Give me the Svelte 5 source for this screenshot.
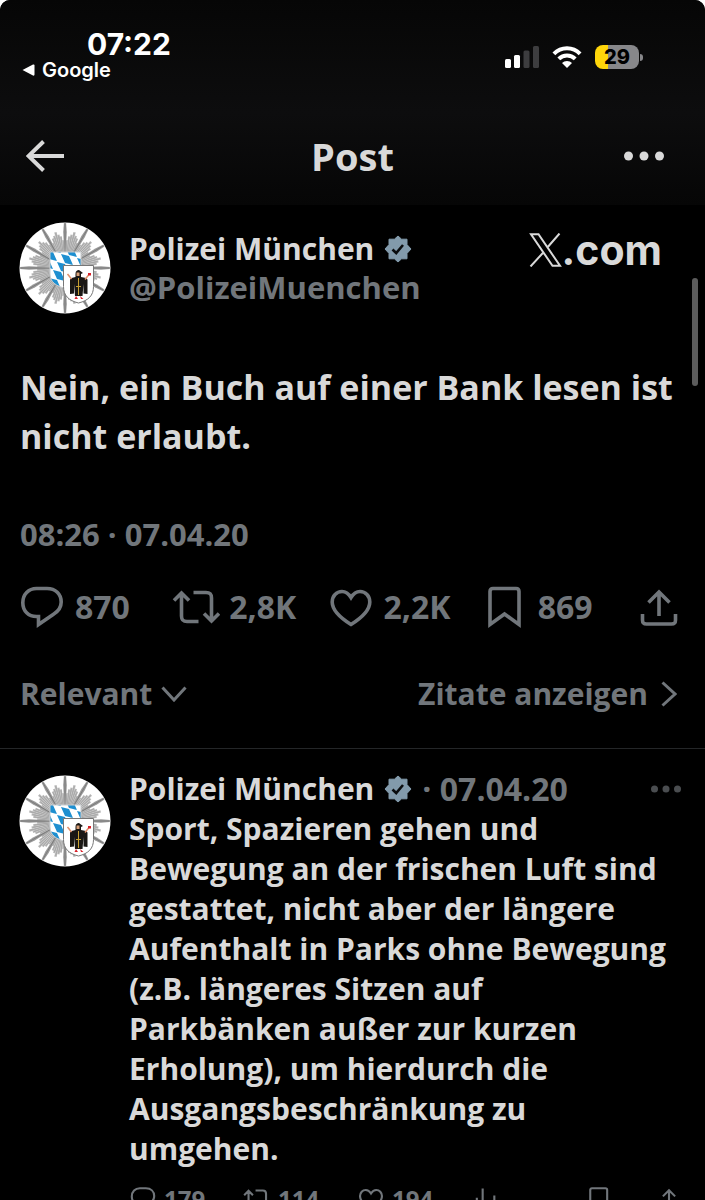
<script lang="ts">
  type IconName = "reply" | "repost" | "like" | "bookmark" | "share" | "views";

  type Action = { icon: IconName; label: string; count?: string };

  const postActions: Action[] = [
    { icon: "reply", label: "Antworten", count: "870" },
    { icon: "repost", label: "Reposten", count: "2,8K" },
    { icon: "like", label: "Gefällt mir", count: "2,2K" },
    { icon: "bookmark", label: "Lesezeichen", count: "869" },
    { icon: "share", label: "Teilen" },
  ];

  const replyActions: Action[] = [
    { icon: "reply", label: "Antworten", count: "179" },
    { icon: "repost", label: "Reposten", count: "114" },
    { icon: "like", label: "Gefällt mir", count: "194" },
    { icon: "views", label: "Aufrufe" },
    { icon: "bookmark", label: "Lesezeichen" },
    { icon: "share", label: "Teilen" },
  ];

  // Police star: twelve long rays with shorter ones stepped in between
  const stepLengths = [45, 28, 32, 34, 37, 34, 32, 28];

  const rays = Array.from({ length: 96 }, (_, i) => {
    const angle = (i / 96) * Math.PI * 2;
    const len = stepLengths[i % 8];
    const long = i % 8 === 0;
    const at = (r: number, a: number) =>
      `${(46 + r * Math.sin(a)).toFixed(1)} ${(46 - r * Math.cos(a)).toFixed(1)}`;
    return {
      shape: long
        ? `M46 46L${at(36, angle - 0.05)}L${at(len, angle - 0.025)}L${at(len, angle + 0.025)}L${at(36, angle + 0.05)}Z`
        : `M46 46L${at(len, angle - 0.034)}L${at(len, angle + 0.034)}Z`,
      line: `M46 46L${at(len - 1, angle)}`,
      long,
    };
  });

  // Bavarian lozenges, one parallelogram per blue field
  const lozenges: string[] = [];
  for (let row = 0; row < 6; row++) {
    for (let col = -2; col < 4; col++) {
      const x = 30 + col * 16 + ((row * 12) % 16);
      const y = 20 + row * 9 + (x - 30) * 0.25;
      lozenges.push(`M${x} ${y}l8 2l4 9l-8-2z`);
    }
  }
</script>

{#snippet icon(name: IconName)}
  <svg class="icon" viewBox="0 0 48 48" stroke-width="3.6" aria-hidden="true">
    {#if name === "reply"}
      <path d="M18.500 5.500h10.500c8.500 0 14.200 5.500 14.200 13.500c0 6-3.200 9.500-7.700 12.200L20.500 41.500v-8h-2C10.500 33.500 4.800 28 4.800 19.700S10.500 5.500 18.500 5.500z" />
    {:else if name === "repost"}
      <path d="M2 17.500L9.500 10l7.500 7.500M9.500 10.500V33c0 4 1.500 5.500 5.500 5.500h11.500M21.500 9.500H34c4 0 5.500 1.500 5.500 5.500v22.500M32 30.500l7.500 7.500 7.500-7.500" />
    {:else if name === "like"}
      <path d="M24 14.500C21.500 10.500 18.500 8.500 15 8.500c-5.500 0-9.800 4.500-9.800 10.500C5.200 27 12 34 24 41.500C36 34 42.800 27 42.800 19c0-6-4.300-10.500-9.800-10.500c-3.500 0-6.500 2-9 6z" />
    {:else if name === "bookmark"}
      <path d="M9 41.500V8.500c0-2 1-3 3-3h23c2 0 3 1 3 3v33L23.500 31z" />
    {:else if name === "share"}
      <path d="M24 33V9M13.500 19.500L24 9l10.500 10.500M7.500 31v6c0 3 1 4 4 4h25c3 0 4-1 4-4v-6" />
    {:else}
      <path d="M20 42V6M40 42V18M10 42V22M30 42V28" />
    {/if}
  </svg>
{/snippet}

{#snippet avatar()}
  <svg class="avatar" viewBox="0 0 92 92" role="img" aria-label="Polizei München">
    <circle cx="46" cy="46" r="45.5" fill="#fff" />
    {#each rays as ray}
      <path d={ray.shape} fill={ray.long ? "#9a9a9a" : "#bababa"} />
      <path d={ray.line} stroke={ray.long ? "#777" : "#9c9c9c"} stroke-width={ray.long ? 0.9 : 0.6} />
    {/each}
    <clipPath id="bavaria">
      <path d="M31 30h31v22c0 8-6 12-15.500 14.500C37 64 31 60 31 52z" />
    </clipPath>
    <g clip-path="url(#bavaria)">
      <rect x="30" y="28" width="34" height="40" fill="#fff" />
      <path d={lozenges.join("")} fill="#1e8fd0" />
    </g>
    <path d="M31 30h31v22c0 8-6 12-15.500 14.500C37 64 31 60 31 52z" fill="none" stroke="#c9cdd0" />
    <path d="M44.500 43.500h30v21c0 9-5 14-15 16.500c-10-2.500-15-7.500-15-16.500z" fill="#fff" stroke="#777" />
    <path d="M56.500 52c0-3 1.500-4 3.500-4l4 3-2 1v3l5 1 1.500 1.500v14.500l-4-.5V62l-1 12h-7.500l-1-12v9.500l-4 .5V57.500l1.500-1.500 4-1z" fill="#1a1714" />
    <path d="M57.500 50.500h3v3.500h-3z" fill="#d8a078" />
    <path d="M59.500 56v17M57 64.500h5" stroke="#c8a032" />
    <path d="M48.500 52l4 5M70 52.500l-4 5" stroke="#e0906a" stroke-width="1.5" />
    <path d="M69 51h3v2.500h-3zM57 74l-1.500 3h3.500zM61 74l1 3h2.500z" fill="#d8222a" />
  </svg>
{/snippet}

{#snippet badge()}
  <svg class="badge" viewBox="0 0 28 28" role="img" aria-label="Verifiziert">
    <path d="M14 1l3.600 3.200h5.400v5.400L27 14l-4 4.400v5.400h-5.400L14 27l-3.600-3.200H5v-5.400L1 14l4-4.400V4.200h5.400z" fill="#829aab" stroke="#829aab" stroke-linejoin="round" />
    <path d="M8.500 14.500l3.700 3.500 6.800-8" fill="none" stroke="#0a0c0e" stroke-width="2.6" />
  </svg>
{/snippet}

{#snippet actionList(items: Action[])}
  {#each items as item}
    <button class="action" aria-label={item.label}>
      {@render icon(item.icon)}
      {#if item.count}<span>{item.count}</span>{/if}
    </button>
  {/each}
{/snippet}

<div class="screen">
  <header>
    <div class="status">
      <div class="clock">
        <time>07:22</time>
        <a href="#google">
          <svg viewBox="0 0 13 12" aria-hidden="true"><path d="M0.500 6L11 .5q1.500-.5 1.500 1v9q0 1.500-1.500 1z" fill="#fff" /></svg>
          Google
        </a>
      </div>
      <div class="indicators">
        <svg class="signal" viewBox="0 0 34 22" aria-hidden="true">
          <rect x="0" y="13" width="6" height="9" rx="1.5" fill="#fff" />
          <rect x="9" y="9" width="6" height="13" rx="1.5" fill="#fff" />
          <rect x="18.5" y="4.5" width="6" height="17.5" rx="1.5" fill="#3d3d3f" />
          <rect x="28" y="0" width="6" height="22" rx="1.5" fill="#3d3d3f" />
        </svg>
        <svg class="wifi" viewBox="0 0 30 22" aria-hidden="true">
          <g fill="none" stroke="#fff" stroke-width="4">
            <path d="M1.900 7.800a18.500 18.500 0 0 1 26.200 0" />
            <path d="M6.800 12.900a11.600 11.600 0 0 1 16.400 0" />
          </g>
          <path d="M15 22l-5-5a7 7 0 0 1 10 0z" fill="#fff" />
        </svg>
        <div class="battery"><span>29</span></div>
      </div>
    </div>
    <nav>
      <button class="back" aria-label="Zurück">
        <svg viewBox="0 0 38 32" aria-hidden="true"><path d="M17.500 1.500L2.500 16l15 14.500M2.500 16H38" /></svg>
      </button>
      <h1>Post</h1>
      <button class="more" aria-label="Mehr">
        <svg viewBox="0 0 40 10" aria-hidden="true"><circle cx="4.5" cy="5" r="4.5" /><circle cx="20" cy="5" r="4.5" /><circle cx="35.5" cy="5" r="4.5" /></svg>
      </button>
    </nav>
  </header>

  <main>
    <article class="post">
      <div class="author">
        {@render avatar()}
        <div class="names">
          <div class="name">Polizei München {@render badge()}</div>
          <div class="handle">@PolizeiMuenchen</div>
        </div>
        <div class="brand">
          <svg viewBox="0 0 33 34" role="img" aria-label="X">
            <path d="M2 1.200h7.500L31 32.800h-7.500zM30.500 .5L18.800 14M14.300 19.500L1.500 33.500" />
          </svg>
          <span>.com</span>
        </div>
      </div>
      <p class="text">Nein, ein Buch auf einer Bank lesen ist nicht erlaubt.</p>
      <div class="date">08:26 · 07.04.20</div>
      <div class="actions">{@render actionList(postActions)}</div>
      <div class="sort">
        <button>
          Relevant
          <svg class="down" viewBox="0 0 26 16" aria-hidden="true"><path d="M1.500 1.500L13 14 24.500 1.500" /></svg>
        </button>
        <a href="#zitate">
          Zitate anzeigen
          <svg class="right" viewBox="0 0 16 26" aria-hidden="true"><path d="M1.500 1.500L14 13 1.500 24.500" /></svg>
        </a>
      </div>
    </article>

    <article class="reply">
      {@render avatar()}
      <div class="body">
        <div class="name">
          Polizei München {@render badge()}
          <span class="when">· 07.04.20</span>
          <button class="more" aria-label="Mehr">
            <svg viewBox="0 0 30 8" aria-hidden="true"><circle cx="3.5" cy="4" r="3.5" /><circle cx="15" cy="4" r="3.5" /><circle cx="26.5" cy="4" r="3.5" /></svg>
          </button>
        </div>
        <p>
          Sport, Spazieren gehen und Bewegung an der frischen Luft sind gestattet, nicht aber der
          längere Aufenthalt in Parks ohne Bewegung (z.B. längeres Sitzen auf Parkbänken außer zur
          kurzen Erholung), um hierdurch die Ausgangsbeschränkung zu umgehen.
        </p>
        <div class="actions">{@render actionList(replyActions)}</div>
      </div>
    </article>
  </main>
  <div class="scrollbar"></div>
</div>

<style>
  :global(body) {
    background: #fff;
  }

  .screen {
    position: relative;
    height: 100vh;
    overflow: hidden;
    border-radius: 10px 10px 0 0;
    background: #000;
    color: #d9d9d9;
    font-family: "Open Sans", "Noto Sans", sans-serif;
    font-weight: 700;
    font-size: 30px;
  }

  button,
  a {
    display: flex;
    align-items: center;
    padding: 0;
    border: 0;
    background: none;
    color: inherit;
    font: inherit;
    text-decoration: none;
  }

  p,
  h1 {
    margin: 0;
  }

  header {
    height: 205px;
    background: linear-gradient(#060606, #0d0d0e 55%, #060606);
  }

  .status {
    display: flex;
    justify-content: space-between;
    padding: 26px 62px 0 22px;
    height: 82px;
    color: #fff;
    font-family: Inter, sans-serif;
  }

  .clock time {
    display: block;
    margin-left: 65px;
    font-size: 30px;
    line-height: 36px;
  }

  .clock a {
    gap: 7px;
    font-size: 20px;
    font-weight: 600;
    line-height: 16px;
  }

  .clock a svg {
    width: 13px;
    height: 12px;
  }

  .indicators {
    display: flex;
    align-items: center;
    align-self: flex-start;
    gap: 13px;
    margin-top: 19px;
  }

  .signal {
    width: 34px;
    height: 22px;
  }

  .wifi {
    width: 30px;
    height: 22px;
  }

  .battery {
    position: relative;
    width: 44px;
    height: 24px;
    margin-right: 4px;
    border-radius: 8px;
    background: linear-gradient(90deg, #ffd60a 30%, #87878a 30%);
    color: #000;
    font-size: 20px;
    font-weight: 800;
    line-height: 24px;
    text-align: center;
  }

  .battery::after {
    content: "";
    position: absolute;
    left: 45px;
    top: 9px;
    width: 3px;
    height: 7px;
    border-radius: 0 3px 3px 0;
    background: #87878a;
  }

  nav {
    display: grid;
    grid-template-columns: 1fr auto 1fr;
    align-items: center;
    padding: 24px 26px 0;
  }

  .back svg {
    width: 38px;
    height: 32px;
    fill: none;
    stroke: #d9d9d9;
    stroke-width: 4;
  }

  h1 {
    font-size: 38px;
    line-height: 48px;
  }

  .more {
    justify-self: end;
  }

  nav .more {
    margin-right: 15px;
  }

  .more svg {
    width: 40px;
    height: 10px;
    fill: #d9d9d9;
  }

  .post {
    border-bottom: 1px solid #242628;
    padding-bottom: 34px;
  }

  .author {
    display: flex;
    padding: 17px 43px 0 19px;
  }

  .avatar {
    flex: none;
    width: 92px;
    height: 92px;
  }

  .names {
    margin: 8px 0 0 18px;
    flex: 1;
  }

  .name {
    display: flex;
    align-items: center;
    gap: 10px;
    line-height: 38px;
  }

  .badge {
    width: 28px;
    height: 28px;
  }

  .handle {
    color: #71767b;
    font-size: 31px;
    line-height: 38px;
  }

  .brand {
    display: flex;
    align-items: center;
    align-self: flex-start;
    height: 56px;
    font-family: Inter, sans-serif;
    font-size: 41px;
    font-weight: 700;
    line-height: 56px;
  }

  .brand svg {
    width: 33px;
    height: 34px;
    fill: none;
    stroke: #d9d9d9;
    stroke-width: 2;
  }

  .text {
    padding: 49px 24px 0 20px;
    font-size: 34px;
    line-height: 49px;
  }

  .date {
    padding: 54px 20px 0;
    color: #71767b;
    font-size: 31px;
    line-height: 38px;
  }

  .actions {
    display: grid;
    color: #71767b;
    font-size: 32px;
  }

  .action {
    gap: 9px;
  }

  .icon {
    flex: none;
    width: 48px;
    height: 48px;
    fill: none;
    stroke: currentColor;
  }

  .post .actions {
    grid-template-columns: repeat(4, 1fr) 48px;
    padding: 30px 22px 0 18px;
    line-height: 40px;
  }

  .sort {
    display: flex;
    justify-content: space-between;
    padding: 43px 28px 0 20px;
    color: #71767b;
    line-height: 40px;
  }

  .sort svg {
    fill: none;
    stroke: currentColor;
    stroke-width: 3;
  }

  .sort button {
    gap: 9px;
  }

  .sort a {
    gap: 13px;
  }

  .down {
    width: 26px;
    height: 16px;
  }

  .right {
    width: 16px;
    height: 26px;
  }

  .reply {
    display: flex;
    gap: 18px;
    padding: 20px 22px 0 19px;
  }

  .reply .avatar {
    margin-top: 6px;
  }

  .body {
    flex: 1;
    line-height: 40px;
  }

  .body .name {
    line-height: 40px;
  }

  .body p {
    padding-right: 12px;
  }

  .when {
    color: #71767b;
    font-size: 32px;
  }

  .body .more {
    margin: 0 2px 0 auto;
  }

  .body .more svg {
    width: 30px;
    height: 8px;
    fill: #4a4d50;
  }

  .body .actions {
    grid-template-columns: repeat(4, 1fr) 70px 28px;
    padding-top: 14px;
    font-size: 24px;
    line-height: 32px;
  }

  .body .action {
    gap: 7px;
  }

  .body .icon {
    width: 28px;
    height: 28px;
  }

  .scrollbar {
    position: absolute;
    top: 278px;
    right: 7px;
    width: 6px;
    height: 108px;
    border-radius: 3px;
    background: #5c5c5c;
  }
</style>
